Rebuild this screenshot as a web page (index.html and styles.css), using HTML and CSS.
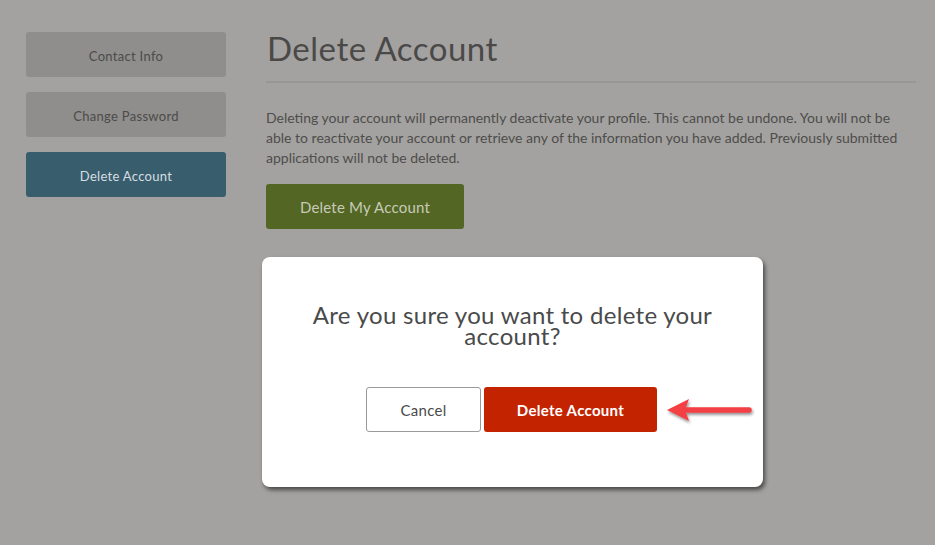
FILE: index.html
```html
<!DOCTYPE html>
<html lang="en">
<head>
<meta charset="utf-8">
<title>Delete Account</title>
<link rel="stylesheet" href="styles.css">
</head>
<body>
<div class="page">
  <nav class="sidebar">
    <a class="side-btn">Contact Info</a>
    <a class="side-btn">Change Password</a>
    <a class="side-btn active">Delete Account</a>
  </nav>
  <main class="main">
    <h1 class="title">Delete Account</h1>
    <p class="desc">Deleting your account will permanently deactivate your profile. This cannot be undone. You will not be able to reactivate your account or retrieve any of the information you have added. Previously submitted applications will not be deleted.</p>
    <button class="primary">Delete My Account</button>
  </main>
</div>
<div class="modal">
  <p class="question">Are you sure you want to delete your account?</p>
  <div class="actions">
    <button class="cancel">Cancel</button>
    <button class="danger">Delete Account</button>
  </div>
</div>
<svg class="arrow" width="110" height="32" viewBox="0 0 110 32">
  <defs>
    <filter id="sh" x="-20%" y="-50%" width="140%" height="200%">
      <feDropShadow dx="1" dy="2" stdDeviation="1.5" flood-color="#000" flood-opacity="0.45"/>
    </filter>
  </defs>
  <g filter="url(#sh)">
    <line x1="30" y1="13" x2="97" y2="13" stroke="#f23f45" stroke-width="5.5" stroke-linecap="round"/>
    <polygon points="15,13 37,2 33,13 37,24" fill="#f23f45"/>
  </g>
</svg>
</body>
</html>
```
FILE: styles.css
```css
html, body {
  margin: 0;
  padding: 0;
}
body {
  background: #a3a2a0;
  font-family: "Lato", "Open Sans", sans-serif;
  width: 935px;
  height: 545px;
  overflow: hidden;
  position: relative;
}
.page {
  display: flex;
  gap: 40px;
  padding: 32px 0 0 26px;
}
.sidebar {
  width: 200px;
  display: flex;
  flex-direction: column;
  gap: 15px;
}
.side-btn {
  display: flex;
  align-items: center;
  justify-content: center;
  height: 45px;
  padding-top: 2px;
  box-sizing: border-box;
  background: #8f8e8c;
  border-radius: 3px;
  color: #4c4b49;
  font-size: 13px;
  letter-spacing: 0.3px;
}
.side-btn.active {
  background: #385e6e;
  color: #d6dde0;
}
.main {
  width: 650px;
}
.title {
  margin: 0;
  font-weight: 400;
  font-size: 33px;
  line-height: 32px;
  letter-spacing: 0.5px;
  color: #4a4948;
  padding: 0 0 17px 1px;
  border-bottom: 2px solid #989795;
}
.desc {
  margin: 25px 0 0;
  font-size: 14px;
  line-height: 20px;
  color: #4e4d4b;
  width: 640px;
}
.primary {
  margin-top: 16px;
  width: 198px;
  height: 45px;
  border: none;
  border-radius: 3px;
  background: #536623;
  color: #c6cbb8;
  font-family: inherit;
  font-size: 15px;
  letter-spacing: 0.2px;
}
.modal {
  position: absolute;
  left: 262px;
  top: 257px;
  width: 501px;
  height: 230px;
  box-sizing: border-box;
  background: #fff;
  border-radius: 8px;
  box-shadow: 2px 3px 4px rgba(0, 0, 0, 0.55);
  padding: 47px 40px 0;
  display: flex;
  flex-direction: column;
  align-items: center;
}
.question {
  margin: 0;
  font-size: 24px;
  line-height: 21px;
  letter-spacing: 0.3px;
  color: #4a4a4a;
  text-align: center;
  width: 420px;
}
.actions {
  display: flex;
  gap: 3px;
  margin-top: 41px;
  margin-right: 2px;
}
.actions button {
  height: 45px;
  font-family: inherit;
  font-size: 15px;
  border-radius: 3px;
  letter-spacing: 0.3px;
}
.cancel {
  width: 115px;
  background: #fff;
  border: 1px solid #9a9a9a;
  color: #4a4a4a;
}
.danger {
  width: 173px;
  background: #c42300;
  border: none;
  color: #fff;
  font-weight: 700;
}
.arrow {
  position: absolute;
  left: 652px;
  top: 397px;
}
```
